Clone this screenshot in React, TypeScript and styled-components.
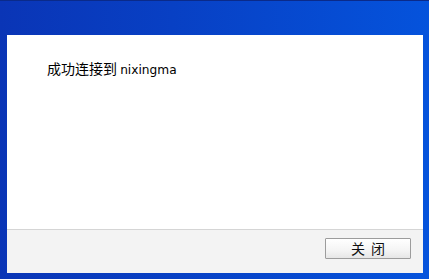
import React from "react";
import styled, { createGlobalStyle } from "styled-components";

const Global = createGlobalStyle`
  html, body { margin: 0; padding: 0; }
  body { font-family: "Noto Sans CJK SC", "DejaVu Sans", sans-serif; }
`;

const Frame = styled.div`
  width: 429px;
  height: 279px;
  box-sizing: border-box;
  padding: 34px 6px 6px 7px;
  display: flex;
  background: linear-gradient(90deg, #0a35b6 0%, #0840c4 40%, #0553dc 100%);
  border-top: 1px solid #0a2a8a;
`;

const Panel = styled.div`
  flex: 1;
  display: flex;
  flex-direction: column;
  background: #ffffff;
`;

const Body = styled.div`
  flex: 1;
  padding: 25px 0 0 40px;
  box-sizing: border-box;
`;

const Message = styled.div`
  font-size: 14px;
  line-height: 16px;
  color: #000;
  font-family: "Noto Sans CJK SC", sans-serif;
`;

const Name = styled.span`
  font-family: "DejaVu Sans", "Liberation Sans", sans-serif;
  font-size: 12.2px;
`;

const Footer = styled.div`
  height: 44px;
  box-sizing: border-box;
  border-top: 1px solid #d5d5d5;
  background: #f3f3f3;
  display: flex;
  justify-content: flex-end;
  align-items: flex-start;
  padding: 8px 12px 0 0;
`;

const Button = styled.button`
  width: 86px;
  height: 21px;
  box-sizing: border-box;
  border: 1px solid #9c9c9c;
  border-radius: 1px;
  background: linear-gradient(180deg, #ffffff 0%, #f4f4f4 60%, #e6e6e6 100%);
  font-family: "Noto Sans CJK SC", sans-serif;
  font-size: 14px;
  line-height: 19px;
  padding: 0;
  color: #111;
  letter-spacing: 6px;
  text-indent: 6px;
`;

export default function App() {
  return (
    <>
      <Global />
      <Frame>
        <Panel>
          <Body>
            <Message>
              成功连接到 <Name>nixingma</Name>
            </Message>
          </Body>
          <Footer>
            <Button>关闭</Button>
          </Footer>
        </Panel>
      </Frame>
    </>
  );
}
